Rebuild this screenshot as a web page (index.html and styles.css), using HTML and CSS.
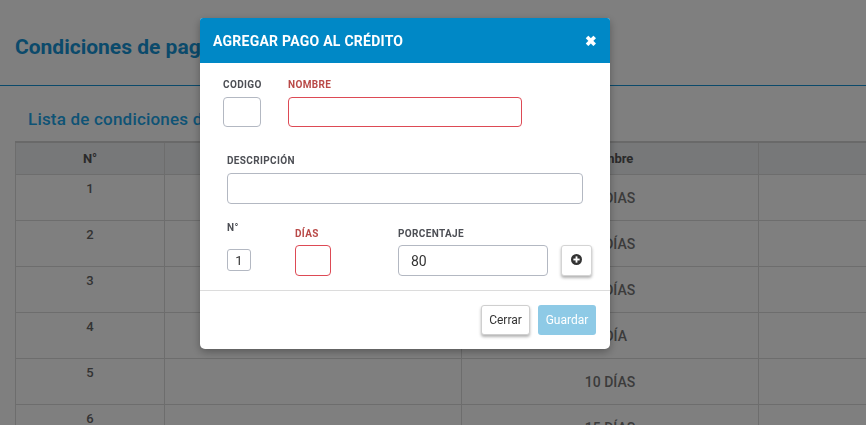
FILE: index.html
```html
<!DOCTYPE html>
<html>
<head>
<title>Condiciones de pago</title>
<link rel="stylesheet" href="styles.css">
</head>
<body>
<div class="page">
  <h1 class="page-title">Condiciones de pago</h1>
  <div class="panel">
    <h2 class="panel-title">Lista de condiciones de pago</h2>
    <table class="list">
      <thead>
        <tr><th class="c-num">N°</th><th class="c-desc">Descripción</th><th class="c-name">Nombre</th><th class="c-act"></th></tr>
      </thead>
      <tbody>
        <tr><td>1</td><td></td><td class="mid">90 DIAS</td><td></td></tr>
        <tr><td>2</td><td></td><td class="mid">60 DÍAS</td><td></td></tr>
        <tr><td>3</td><td></td><td class="mid">30 DÍAS</td><td></td></tr>
        <tr><td>4</td><td></td><td class="mid">1 DÍA</td><td></td></tr>
        <tr><td>5</td><td></td><td class="mid">10 DÍAS</td><td></td></tr>
        <tr><td>6</td><td></td><td class="mid">15 DÍAS</td><td></td></tr>
      </tbody>
    </table>
  </div>
</div>

<div class="backdrop"></div>

<div class="modal">
  <div class="modal-header">
    <span class="modal-title">AGREGAR PAGO AL CRÉDITO</span>
    <span class="close">&#10006;</span>
  </div>
  <div class="modal-body">
    <div class="row row-top">
      <div class="field field-code">
        <label class="lbl">CODIGO</label>
        <input class="inp inp-code" type="text">
      </div>
      <div class="field">
        <label class="lbl lbl-err">NOMBRE</label>
        <input class="inp inp-err inp-name" type="text">
      </div>
    </div>
    <div class="row row-desc">
      <div class="field">
        <label class="lbl">DESCRIPCIÓN</label>
        <input class="inp inp-desc" type="text">
      </div>
    </div>
    <div class="row row-terms">
      <div class="field col-num">
        <label class="lbl">N°</label>
        <input class="inp inp-num" type="text" value="1">
      </div>
      <div class="field col-days">
        <label class="lbl lbl-err">DÍAS</label>
        <input class="inp inp-err inp-days" type="text">
      </div>
      <div class="field col-pct">
        <label class="lbl">PORCENTAJE</label>
        <input class="inp inp-pct" type="text" value="80">
      </div>
      <button class="btn-add">
        <svg width="11" height="11" viewBox="0 0 12 12"><circle cx="6" cy="6" r="6" fill="#333"/><rect x="2.6" y="5" width="6.8" height="2" fill="#fff"/><rect x="5" y="2.6" width="2" height="6.8" fill="#fff"/></svg>
      </button>
    </div>
  </div>
  <div class="modal-footer">
    <button class="btn btn-close">Cerrar</button>
    <button class="btn btn-save">Guardar</button>
  </div>
</div>
</body>
</html>
```

FILE: styles.css
```css
html, body {
  margin: 0;
  overflow: hidden;
  height: 100%;
}

body {
  background: #fff;
  font-family: Roboto, "Liberation Sans", sans-serif;
  color: #333;
}

.page {
  padding: 0 15px;
}

.page-title {
  margin: 0 -15px;
  padding: 34px 0 0 15px;
  height: 51px;
  font-size: 21px;
  line-height: 26px;
  font-weight: 700;
  color: #1694d6;
  border-bottom: 1px solid #1694d6;
}

.panel-title {
  margin: 0;
  padding: 22px 0 0 13px;
  height: 33px;
  font-size: 17px;
  line-height: 22px;
  font-weight: 500;
  color: #1ca6ea;
  letter-spacing: 0.2px;
}

.list {
  border-collapse: collapse;
  width: 1036px;
  table-layout: fixed;
  border-top: 2px solid #d2d2d2;
  font-size: 13px;
}

.list th {
  background: #eef0f2;
  height: 31px;
  font-weight: 700;
  color: #555;
  border-left: 1px solid #dadada;
  padding: 0;
}

.list td {
  height: 46px;
  border: 1px solid #dadada;
  text-align: center;
  vertical-align: top;
  padding: 6px 0 0;
  box-sizing: border-box;
  font-weight: 500;
  color: #666;
}

.list td.mid {
  vertical-align: middle;
  padding-top: 0;
  font-size: 14px;
  color: #777;
}

.c-num { width: 148px; }
.c-desc { width: 296px; }
.c-name { width: 296px; }
.c-act { width: 296px; }

.backdrop {
  position: fixed;
  inset: 0;
  background: rgba(0, 0, 0, 0.5);
}

.modal {
  position: fixed;
  left: 200px;
  top: 18px;
  width: 410px;
  height: 331px;
  background: #fff;
  border-radius: 3px 3px 5px 5px;
  overflow: hidden;
  box-shadow: 0 3px 9px rgba(0, 0, 0, 0.3);
}

.modal-header {
  height: 45px;
  background: #0088c6;
  display: flex;
  align-items: center;
  justify-content: space-between;
  padding: 0 13px;
  color: #fff;
}

.modal-title {
  font-size: 14px;
  font-weight: 700;
  letter-spacing: 0.25px;
}

.close {
  font-size: 14px;
  font-weight: 700;
}

.modal-body {
  padding: 16px 0 14px 23px;
  border-bottom: 1px solid #dcdcdc;
}

.row {
  display: flex;
  align-items: flex-start;
}

.field {
  display: flex;
  flex-direction: column;
  align-items: flex-start;
}

.lbl {
  font-size: 10px;
  line-height: 12px;
  font-weight: 700;
  letter-spacing: 0.35px;
  color: #4d4f55;
  margin-bottom: 6px;
  white-space: nowrap;
}

.lbl-err {
  color: #b94a48;
}

.inp {
  box-sizing: border-box;
  border: 1px solid #b3b8c2;
  border-radius: 4px;
  height: 30px;
  padding: 0 12px;
  font-family: Roboto, "Liberation Sans", sans-serif;
  font-size: 14px;
  color: #333;
  background: #fff;
  outline: none;
}

.inp-err {
  border-color: #dd4a55;
}

.row-top {
  gap: 27px;
}

.field-code { width: 38px; }
.inp-code { width: 38px; }
.inp-name { width: 234px; }

.row-desc {
  margin-top: 28px;
  padding-left: 4px;
}

.inp-desc {
  width: 356px;
  height: 31px;
}

.row-terms {
  margin-top: 18px;
  padding-left: 4px;
}

.col-num { width: 68px; }
.col-num .lbl { margin-bottom: 15px; }

.inp-num {
  width: 24px;
  height: 22px;
  padding: 0;
  text-align: center;
  font-size: 13px;
  border-radius: 3px;
}

.col-days {
  width: 103px;
  margin-top: 6px;
}

.col-days .lbl,
.col-pct .lbl { margin-bottom: 5px; }

.inp-days {
  width: 36px;
  height: 31px;
}

.col-pct { margin-top: 6px; }

.inp-pct {
  width: 150px;
  height: 31px;
}

.btn-add {
  margin-top: 23px;
  margin-left: 13px;
  width: 31px;
  height: 31px;
  background: #fff;
  border: 1px solid #d4d4d4;
  border-radius: 3px;
  box-shadow: 0 2px 3px rgba(0, 0, 0, 0.3);
  display: flex;
  align-items: center;
  justify-content: center;
  padding: 0 0 3px;
}

.modal-footer {
  display: flex;
  justify-content: flex-end;
  gap: 8px;
  padding: 14px 14px 0 0;
}

.btn {
  height: 30px;
  border-radius: 3px;
  font-family: Roboto, "Liberation Sans", sans-serif;
  font-size: 12px;
  padding: 0;
}

.btn-close {
  width: 49px;
  background: #fff;
  color: #333;
  border: 1px solid #cfcfcf;
  box-shadow: 0 2px 3px rgba(0, 0, 0, 0.3);
}

.btn-save {
  width: 58px;
  background: #8ecae6;
  color: #fff;
  border: none;
}
```
